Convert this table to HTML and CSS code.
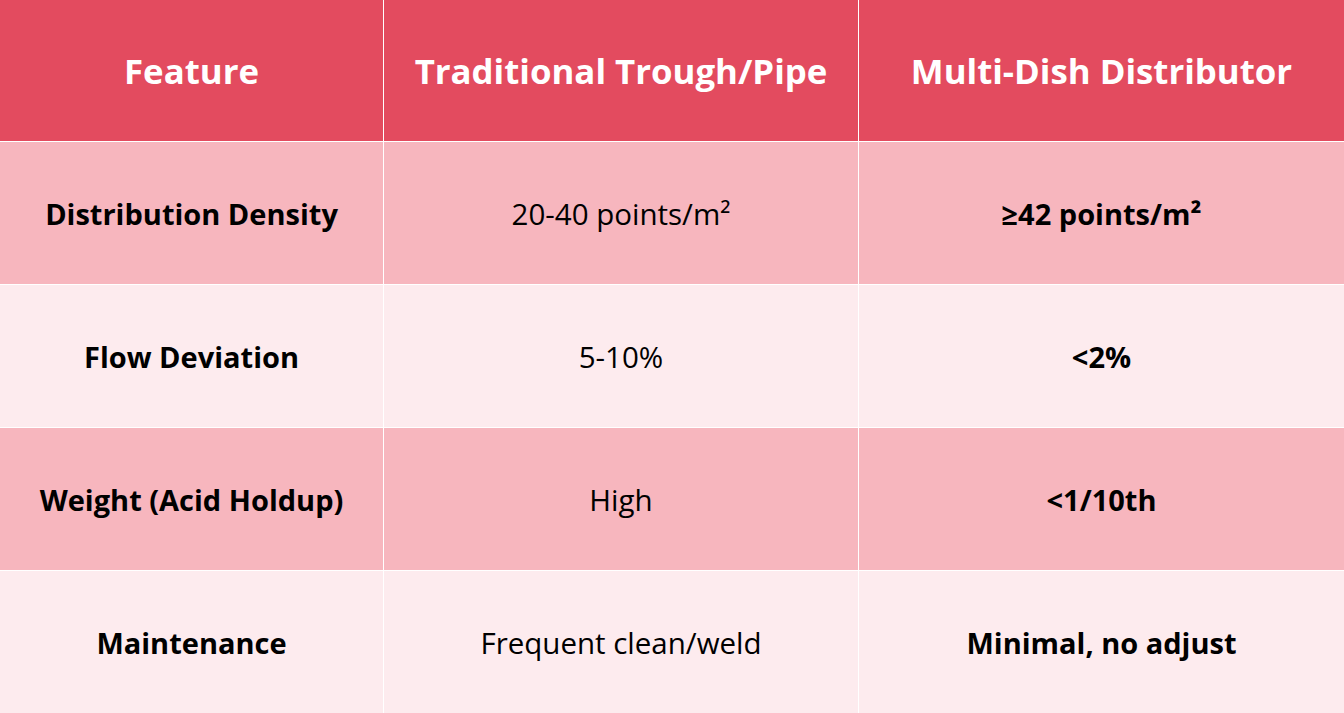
FILE: index.html
```html
<!DOCTYPE html>
<html lang="en">
<head>
<meta charset="utf-8">
<title>Comparison</title>
<link rel="stylesheet" href="styles.css">
</head>
<body>
<div class="table">
  <div class="cell head">Feature</div>
  <div class="cell head">Traditional Trough/Pipe</div>
  <div class="cell head">Multi-Dish Distributor</div>

  <div class="cell odd strong">Distribution Density</div>
  <div class="cell odd">20-40 points/m²</div>
  <div class="cell odd strong">≥42 points/m²</div>

  <div class="cell even strong">Flow Deviation</div>
  <div class="cell even">5-10%</div>
  <div class="cell even strong">&lt;2%</div>

  <div class="cell odd strong">Weight (Acid Holdup)</div>
  <div class="cell odd">High</div>
  <div class="cell odd strong">&lt;1/10th</div>

  <div class="cell even strong">Maintenance</div>
  <div class="cell even">Frequent clean/weld</div>
  <div class="cell even strong">Minimal, no adjust</div>
</div>
</body>
</html>
```

FILE: styles.css
```css
html, body {
  margin: 0;
  padding: 0;
  background: #ffffff;
}
body {
  font-family: "Open Sans", "Noto Sans", sans-serif;
  width: 1344px;
  height: 713px;
  overflow: hidden;
}
.table {
  display: grid;
  grid-template-columns: 383px 474px 485px;
  grid-template-rows: 141px repeat(4, 142px);
  gap: 1px;
  background: #ffffff;
  width: 1344px;
  height: 713px;
}
.cell {
  display: flex;
  align-items: center;
  justify-content: center;
  text-align: center;
  color: #000000;
  font-size: 29.5px;
}
.head {
  background: #e34b5f;
  color: #ffffff;
  font-weight: 700;
  font-size: 34.8px;
}
.odd {
  background: #f7b6be;
}
.even {
  background: #fdebee;
}
.strong {
  font-weight: 700;
  font-size: 29px;
}
```
